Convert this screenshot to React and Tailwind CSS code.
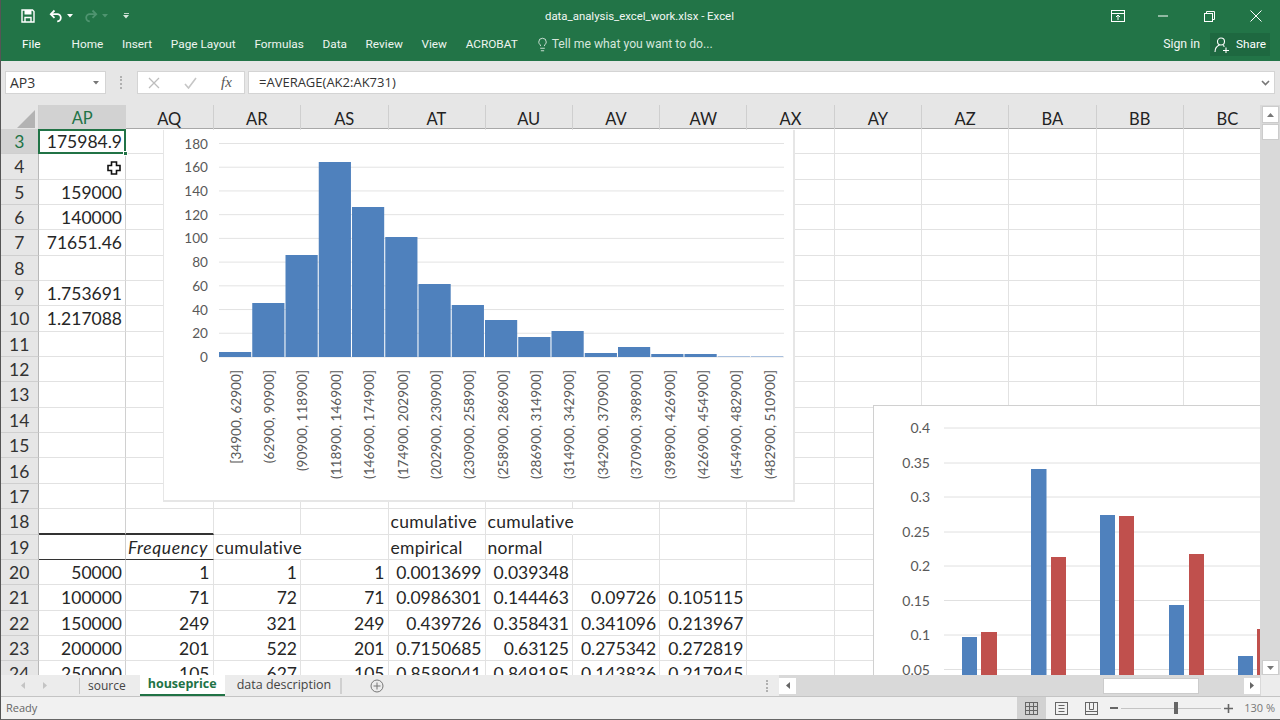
import React from "react";
import { Lightbulb } from "lucide-react";

const cols = ["AP","AQ","AR","AS","AT","AU","AV","AW","AX","AY","AZ","BA","BB","BC"];
const gridTpl = "grid grid-cols-[37.5px_repeat(4,87.5px)_97px_repeat(8,87.3px)_88px]";

const data = {
  3: ["175984.9"], 5: ["159000"], 6: ["140000"], 7: ["71651.46"],
  9: ["1.753691"], 10: ["1.217088"],
  18: [null,null,null,null,"<cumulative","<cumulative"],
  19: [null,"/Frequency","<cumulative",null,"<empirical","<normal"],
  20: ["50000","1","1","1","0.0013699","0.039348"],
  21: ["100000","71","72","71","0.0986301","0.144463","0.09726","0.105115"],
  22: ["150000","249","321","249","0.439726","0.358431","0.341096","0.213967"],
  23: ["200000","201","522","201","0.7150685","0.63125","0.275342","0.272819"],
  24: ["250000","105","627","105","0.8589041","0.849195","0.143836","0.217945"],
};
const noRight = { "18-5": 1, "19-2": 1 };

function Cell({ r, c }) {
  const raw = (data[r] || [])[c];
  const left = raw && raw[0] === "<";
  const ital = raw && raw[0] === "/";
  const txt = raw ? (left || ital ? raw.slice(1) : raw) : "";
  let bottom = "border-b border-b-[#e2e2e2]";
  if (r === 18 && c < 2) bottom = "border-b-2 border-b-[#333333]";
  if (r === 19 && c < 2) bottom = "border-b border-b-[#333333]";
  const right = noRight[`${r}-${c}`] ? "border-r border-r-transparent" : c === 0 ? "border-r border-r-[#d0d0d0]" : "border-r border-r-[#e2e2e2]";
  const align = left ? "justify-start pl-[2px] tracking-[0.3px]" : ital ? "justify-end pr-[4.5px] italic tracking-[0.6px]" : "justify-end pr-[3px]";
  return (
    <div className={`flex items-center whitespace-nowrap pt-[2px] ${align} ${bottom} ${right}`}>
      {txt}
    </div>
  );
}

const histTops = [352,303,255,162,207,237,284,305,320,337,331,353,347,354,354,356,356];
const histLabels = ["[34900, 62900]","(62900, 90900]","(90900, 118900]","(118900, 146900]","(146900, 174900]","(174900, 202900]","(202900, 230900]","(230900, 258900]","(258900, 286900]","(286900, 314900]","(314900, 342900]","(342900, 370900]","(370900, 398900]","(398900, 426900]","(426900, 454900]","(454900, 482900]","(482900, 510900]"];

function Histogram() {
  const ticks = [180,160,140,120,100,80,60,40,20,0];
  return (
    <div className="absolute left-[162px] top-[1px] w-[632px] h-[372px] bg-white border-r-2 border-b-2 border-l border-[#e6e6e6]">
      <svg viewBox="163 130 632 372" width="632" height="372" className="absolute left-[-1px] top-0">
        {ticks.map((t, i) => {
          const y = 143.5 + i * 23.72;
          return (
            <g key={t}>
              <line x1="219" x2="784" y1={y} y2={y} stroke="#e3e3e3" strokeWidth="1" />
              <text x="208" y={y + 5} textAnchor="end" fontSize="13.6" fill="#595959">{t}</text>
            </g>
          );
        })}
        {histTops.map((t, i) => (
          <rect key={i} x={219 + i * 33.25} y={t} width="32.2" height={357 - t} fill={i > 14 ? "#a9c0de" : "#4f81bd"} />
        ))}
        {histLabels.map((l, i) => (
          <text key={l} transform={`translate(${236 + i * 33.38},370) rotate(-90)`} dy="4.6" textAnchor="end" fontSize="13.6" fill="#595959">{l}</text>
        ))}
      </svg>
    </div>
  );
}

function BarChart() {
  const ys = [["0.4",428],["0.35",463],["0.3",497],["0.25",532],["0.2",566],["0.15",600.5],["0.1",635],["0.05",669.5]];
  const bars = [
    [962,15,637,"#4f81bd"],[981,16,632,"#c0504d"],
    [1031,15.5,469,"#4f81bd"],[1051,15,557,"#c0504d"],
    [1100,15,515,"#4f81bd"],[1119,15,516,"#c0504d"],
    [1169,15,605,"#4f81bd"],[1189,15,554,"#c0504d"],
    [1238,15,656,"#4f81bd"],[1257,3,629,"#c0504d"],
  ];
  return (
    <div className="absolute left-[872px] top-[276px] w-[387px] h-[270px] bg-white border-t border-l border-[#d0d0d0] overflow-hidden">
      <svg viewBox="873 405 387 270" width="387" height="270" className="absolute left-[-1px] top-[-1px]">
        {ys.map(([t, y]) => (
          <g key={t}>
            <line x1="944" x2="1260" y1={y} y2={y} stroke="#e0e0e0" strokeWidth="1" />
            <text x="930" y={y + 5} textAnchor="end" fontSize="14" fill="#595959">{t}</text>
          </g>
        ))}
        {bars.map(([x, w, y, f], i) => (
          <rect key={i} x={x} y={y} width={w} height={675 - y} fill={f} />
        ))}
      </svg>
    </div>
  );
}

function SaveIcon() {
  return (
    <svg width="14" height="14" viewBox="0 0 14 14" fill="none" stroke="#fff" strokeWidth="1.4">
      <path d="M1 1h10.5L13 2.5V13H1z" />
      <rect x="3.5" y="1" width="7" height="4.5" fill="#fff" stroke="none" />
      <path d="M4 13V8.5h6V13" />
    </svg>
  );
}
function Undo({ faded }) {
  return (
    <svg width="15" height="14" viewBox="0 0 15 14" fill="none" stroke={faded ? "#4f9470" : "#fff"} strokeWidth="1.8" className={faded ? "-scale-x-100" : ""}>
      <path d="M5.5 1.5 1.8 5.2 5.5 8.8" />
      <path d="M2 5.2h6.2a3.6 3.6 0 0 1 3.6 3.6 3.6 3.6 0 0 1-3.6 3.6" />
    </svg>
  );
}
function Caret({ c = "#fff" }) {
  return <svg width="6" height="4" viewBox="0 0 6 4"><path d="M0 0h6L3 3.5z" fill={c} /></svg>;
}

function Tab({ children }) {
  return <span className="whitespace-nowrap">{children}</span>;
}

export default function App() {
  const rows = [];
  for (let r = 3; r <= 24; r++) rows.push(r);
  return (
    <div className="w-[1280px] h-[720px] overflow-hidden flex flex-col bg-[#e6e6e6] font-[Lato,sans-serif] border-l border-b border-l-[#555555] border-b-[#666666]">
      {/* Title bar */}
      <div className="h-[61px] shrink-0 bg-[#227447] text-white font-[Roboto,sans-serif] text-[11.8px] flex flex-col">
        <div className="h-[32px] flex items-center relative">
          <div className="flex items-center ml-[20px]">
            <SaveIcon />
            <span className="ml-[14px]"><Undo /></span>
            <span className="ml-[3px]"><Caret /></span>
            <span className="ml-[10px]"><Undo faded /></span>
            <span className="ml-[4px]"><Caret c="#4f9470" /></span>
            <span className="ml-[15px] flex flex-col items-center gap-[1px]"><span className="w-[5px] h-px bg-white opacity-70" /><Caret c="#d6e6dc" /></span>
          </div>
          <div className="absolute left-[544px] top-[8px] text-[11.4px] text-[#f2f7f4] whitespace-nowrap">data_analysis_excel_work.xlsx - Excel</div>
          <div className="ml-auto flex items-center text-white">
            <svg width="14" height="12" viewBox="0 0 14 12" fill="none" stroke="#fff" className="mr-[32px]"><rect x=".5" y=".5" width="13" height="11" /><path d="M.5 3.5h13M7 10V5M5 7l2-2 2 2" /></svg>
            <svg width="12" height="2" viewBox="0 0 12 2" className="mr-[35px]"><path d="M1 1h10" stroke="#fff" /></svg>
            <svg width="11" height="11" viewBox="0 0 11 11" fill="none" stroke="#fff" className="mr-[35px]"><rect x=".5" y="2.5" width="8" height="8" /><path d="M2.5 2.5v-2h8v8h-2" /></svg>
            <svg width="12" height="12" viewBox="0 0 12 12" className="mr-[18px]"><path d="M.5.5l11 11M11.5.5l-11 11" stroke="#fff" /></svg>
          </div>
        </div>
        <div className="h-[24px] flex items-center relative pt-px">
          <span className="ml-[21px]">File</span>
          <div className="ml-[31px] flex items-center gap-[18.7px] text-[#eef5f0]">
            <Tab>Home</Tab><Tab>Insert</Tab><Tab>Page Layout</Tab><Tab>Formulas</Tab><Tab>Data</Tab><Tab>Review</Tab><Tab>View</Tab><Tab>ACROBAT</Tab>
          </div>
          <Lightbulb size={15} strokeWidth={1.2} className="ml-[17px] text-white" />
          <span className="ml-[2px] text-[12.2px] text-[#d5e6db]">Tell me what you want to do...</span>
          <span className="ml-auto text-[12.3px] text-[#f2f7f4]">Sign in</span>
          <div className="ml-[10px] mr-[10px] h-[23px] w-[60px] bg-[#1e6840] flex items-center pl-[4px] gap-[6px]">
            <svg width="16" height="16" viewBox="0 0 16 16" fill="none" stroke="#fff" strokeWidth="1.1"><circle cx="7" cy="4.5" r="3.5" /><path d="M1 15c0-3.5 2-6 4.5-7M9 8.5l1.5 1M9 13.5h6M12 10.5v6" /></svg>
            <span>Share</span>
          </div>
        </div>
      </div>

      {/* Formula bar */}
      <div className="h-[44px] shrink-0 flex items-start pt-[10px] text-[13px] font-['Open_Sans',sans-serif] text-[#333333]">
        <div className="ml-[4px] w-[101px] h-[23px] bg-white border border-[#d4d4d4] flex items-center justify-between pl-[4px] pr-[6px]">
          <span className="text-[14px]">AP3</span><Caret c="#777777" />
        </div>
        <div className="ml-[14px] w-[3px] h-[13px] mt-[5px] border-l-2 border-dotted border-[#b0b0b0]" />
        <div className="ml-[14px] w-[108px] h-[23px] bg-white border border-[#d4d4d4] flex items-center">
          <svg width="12" height="12" viewBox="0 0 12 12" className="ml-[10px]"><path d="M1 1l10 10M11 1L1 11" stroke="#bdbdbd" strokeWidth="1.3" /></svg>
          <svg width="13" height="12" viewBox="0 0 13 12" className="ml-[24px]" fill="none"><path d="M1 7l3.5 4L12 1" stroke="#c6c6c6" strokeWidth="1.6" /></svg>
          <span className="ml-[24px] italic font-['Liberation_Serif',serif] text-[15px] text-[#555555]">fx</span>
        </div>
        <div className="ml-[3px] w-[1027px] h-[23px] bg-white border border-[#d4d4d4] flex items-center pl-[10px]">
          <span>=AVERAGE(AK2:AK731)</span>
          <svg width="9" height="6" viewBox="0 0 9 6" className="ml-auto mr-[4px]" fill="none"><path d="M1 1l3.5 3.5L8 1" stroke="#777777" strokeWidth="1.6" /></svg>
        </div>
      </div>

      {/* Sheet */}
      <div className="h-[570px] shrink-0 flex">
        <div className="w-[1259px] shrink-0 flex flex-col overflow-hidden">
          <div className={`${gridTpl} h-[24px] shrink-0 text-[16.5px] text-[#222222] border-b border-b-[#a8a8a8]`}>
            <div className="relative bg-[#e6e6e6] border-r border-r-[#cfcfcf]">
              <svg width="18" height="18" viewBox="0 0 18 18" className="absolute left-[16px] top-[5px]"><path d="M18 0v18H0z" fill="#b3b3b3" /></svg>
            </div>
            {cols.map((c, i) => (
              <div key={c} className={i === 0 ? "flex items-center justify-center pt-px bg-[#d2d2d2] text-[#217346] border-b-2 border-b-[#217346] -mb-px" : "flex items-center justify-center pt-px border-r border-r-[#cfcfcf]"}>
                {c}
              </div>
            ))}
          </div>
          <div className="relative flex-1 overflow-hidden bg-white text-[17.5px] text-[#262626]">
            <div className={`${gridTpl} auto-rows-[25.35px]`}>
              {rows.map((r) => (
                <React.Fragment key={r}>
                  <div className={`flex items-center justify-center pt-[2px] border-r border-r-[#b8b8b8] border-b border-b-[#cfcfcf] ${r === 3 ? "bg-[#d2d2d2] text-[#217346]" : "bg-[#e6e6e6] text-[#333333]"}`}>{r}</div>
                  {cols.map((c, i) => <Cell key={c} r={r} c={i} />)}
                </React.Fragment>
              ))}
            </div>
            <div className="absolute left-[37px] top-0 w-[88px] h-[25px] border-2 border-[#217346]" />
            <div className="absolute left-[122px] top-[22px] w-[5px] h-[5px] bg-[#217346] border border-white" />
            <Histogram />
            <BarChart />
            <svg width="14" height="14" viewBox="0 0 14 14" className="absolute left-[106px] top-[32px]">
              <path d="M4.5 1h5v3.5H13v5H9.5V13h-5V9.5H1v-5h3.5z" fill="#fff" stroke="#111" strokeWidth="1.6" />
            </svg>
          </div>
        </div>
        {/* Vertical scrollbar */}
        <div className="w-[20px] shrink-0 bg-[#d9d9d9] flex flex-col items-center px-[1px] pt-[1px]">
          <div className="w-[17px] h-[17px] bg-white border border-[#cccccc] flex items-center justify-center"><svg width="7" height="4" viewBox="0 0 7 4"><path d="M3.5 0L7 4H0z" fill="#777777" /></svg></div>
          <div className="w-[17px] h-[16px] bg-white border border-[#cccccc] mt-[1px]" />
          <div className="w-[17px] h-[15px] bg-white border border-[#cccccc] mt-auto flex items-center justify-center"><svg width="7" height="4" viewBox="0 0 7 4"><path d="M0 0h7L3.5 4z" fill="#777777" /></svg></div>
        </div>
      </div>

      {/* Tabs */}
      <div className="h-[22px] shrink-0 flex bg-[#ececec] font-['Open_Sans',sans-serif] text-[12.5px] text-[#444444] border-b border-b-[#c4c4c4]">
        <div className="flex items-center">
          <svg width="4" height="7" viewBox="0 0 4 7" className="ml-[20px]"><path d="M4 0v7L0 3.5z" fill="#c4c4c4" /></svg>
          <svg width="4" height="7" viewBox="0 0 4 7" className="ml-[18px]"><path d="M0 0v7l4-3.5z" fill="#c4c4c4" /></svg>
          <div className="ml-[32px] w-px h-[16px] bg-[#c8c8c8]" />
          <span className="ml-[8px] text-[12px]">source</span>
          <div className="ml-[14px] h-[21px] w-[85px] bg-white border-b-2 border-b-[#217346] flex items-center justify-center font-bold text-[#217346]">houseprice</div>
          <span className="ml-[12px]">data description</span>
          <div className="ml-[9px] w-[2px] h-[16px] bg-[#d0d0d0]" />
          <svg width="14" height="14" viewBox="0 0 14 14" fill="none" stroke="#777777" className="ml-[28px]"><circle cx="7" cy="7" r="6" /><path d="M7 3.5v7M3.5 7h7" /></svg>
        </div>
        <div className="ml-auto flex items-center">
          <div className="mr-[11px] w-[2px] h-[12px] border-l-2 border-dotted border-[#b0b0b0]" />
          <div className="w-[482px] h-[21px] bg-[#d9d9d9] flex items-center">
            <div className="w-[17px] h-[16px] bg-white flex items-center justify-center"><svg width="4" height="7" viewBox="0 0 4 7"><path d="M4 0v7L0 3.5z" fill="#666666" /></svg></div>
            <div className="ml-[307px] w-[96px] h-[16px] bg-white border border-[#cccccc]" />
            <div className="ml-[45px] w-[16px] h-[16px] bg-white flex items-center justify-center"><svg width="4" height="7" viewBox="0 0 4 7"><path d="M0 0v7l4-3.5z" fill="#666666" /></svg></div>
          </div>
          <div className="w-[19px]" />
        </div>
      </div>

      {/* Status bar */}
      <div className="flex-1 flex items-center bg-[#f1f1f1] font-['Open_Sans',sans-serif] text-[11px] text-[#666666]">
        <span className="ml-[5px]">Ready</span>
        <div className="ml-auto flex items-center h-full">
          <div className="w-[29px] h-full bg-[#d2d2d2] flex items-center justify-center">
            <svg width="13" height="13" viewBox="0 0 13 13" fill="none" stroke="#666666"><rect x=".5" y=".5" width="12" height="12" /><path d="M4.5.5v12M8.5.5v12M.5 4.5h12M.5 8.5h12" /></svg>
          </div>
          <div className="w-[30px] flex justify-center">
            <svg width="13" height="13" viewBox="0 0 13 13" fill="none" stroke="#666666"><rect x=".5" y=".5" width="12" height="12" /><path d="M3.5 3.5h6M3.5 6.5h6M3.5 9.5h6" /></svg>
          </div>
          <div className="w-[30px] flex justify-center">
            <svg width="13" height="13" viewBox="0 0 13 13" fill="none" stroke="#666666"><rect x=".5" y=".5" width="12" height="12" /><path d="M4.5.5v7h4v-7M.5 9.5h12" /></svg>
          </div>
          <svg width="8" height="2" viewBox="0 0 8 2" className="ml-[4px]"><path d="M0 1h8" stroke="#666666" strokeWidth="2" /></svg>
          <div className="ml-[3px] w-[100px] h-px bg-[#c4c4c4] relative">
            <div className="absolute left-[53px] top-[-6px] w-[4px] h-[12px] bg-[#666666]" />
          </div>
          <svg width="9" height="9" viewBox="0 0 9 9" className="ml-[3px]"><path d="M0 4.5h9M4.5 0v9" stroke="#666666" strokeWidth="1.6" /></svg>
          <span className="ml-[11px] mr-[5px] text-[#777777]">130 %</span>
        </div>
      </div>
    </div>
  );
}
